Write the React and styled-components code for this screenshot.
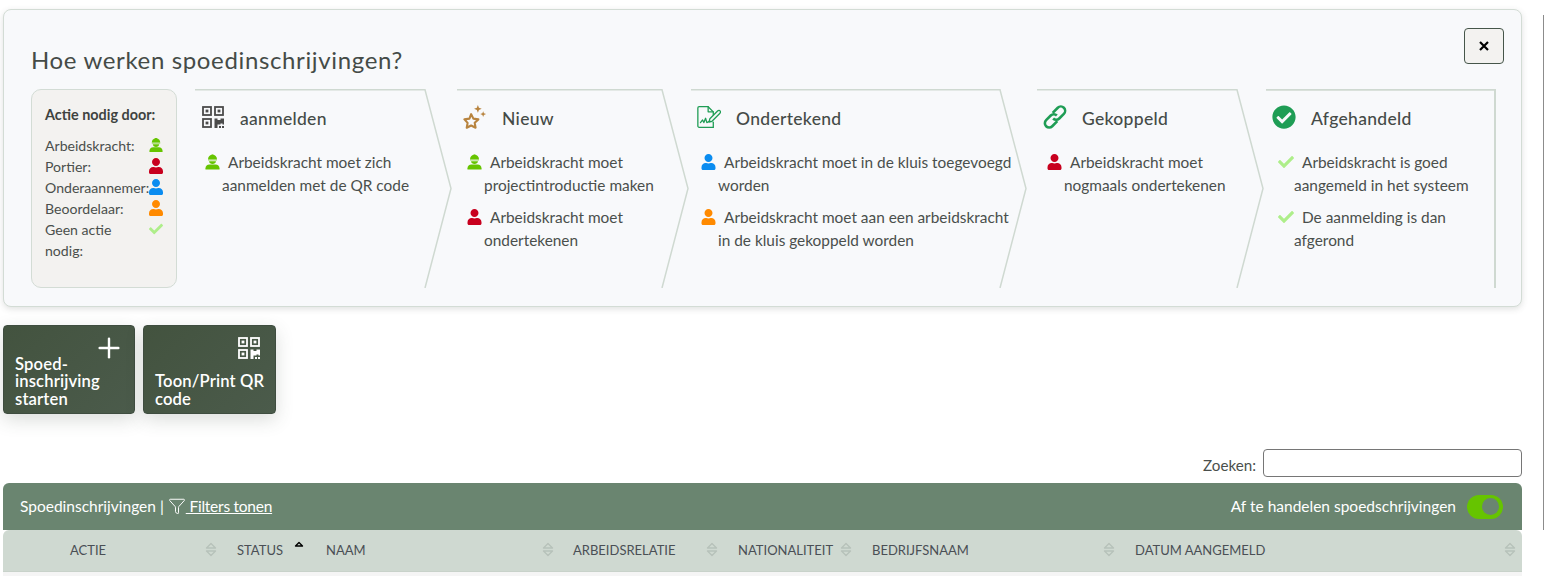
import React from 'react'
import styled, { createGlobalStyle } from 'styled-components'
import { FaUser, FaCheck, FaCheckCircle } from 'react-icons/fa'
import { Filter, Plus } from 'lucide-react'

const GlobalStyle = createGlobalStyle`
	html, body { margin: 0; background: #fff; }
	body { font-family: "Lato", "Noto Sans", sans-serif; color: #4a4f4c; overflow: hidden; }
	* { box-sizing: border-box; }
`

const Page = styled.div`
	padding: 9px 22px 0 3px;
	height: 576px;
	overflow: hidden;
`

const Card = styled.section`
	position: relative;
	height: 298px;
	padding: 0 26px 0 27px;
	background: #f8f9fb;
	border: 1px solid #d3dcd5;
	border-radius: 8px;
	box-shadow: 0 2px 6px rgba(60, 70, 60, 0.16);
`

const Title = styled.h2`
	margin: 0;
	height: 79px;
	padding: 33px 0 0;
	font-size: 24px;
	line-height: 34px;
	font-weight: 400;
	letter-spacing: 0.64px;
	color: #454b47;
`

const CloseButton = styled.button`
	position: absolute;
	top: 18px;
	right: 17px;
	width: 40px;
	height: 36px;
	display: flex;
	align-items: center;
	justify-content: center;
	background: #f3f2f0;
	border: 1px solid #46564a;
	border-radius: 4px;
	color: #000;
	padding: 0;
`

const Body = styled.div`
	display: flex;
	gap: 18px;
	height: 199px;
`

const Legend = styled.aside`
	flex: 0 0 146px;
	padding: 14px 0 0 13px;
	background: #f3f2f0;
	border: 1px solid #d3dcd5;
	border-radius: 10px;
	font-size: 14.1px;
	line-height: 21px;
`

const LegendTitle = styled.div`
	font-weight: 700;
	font-size: 14.4px;
	margin-bottom: 10px;
	color: #3e4340;
`

const LegendGrid = styled.div`
	display: grid;
	grid-template-columns: 104px 14px;
`

const LegendIcon = styled.span`
	display: flex;
	justify-content: center;
	align-items: flex-start;
	padding-top: 2px;
`

const Steps = styled.div`
	flex: 1;
	display: grid;
	grid-template-columns: 262px 234px 346px 229px 1fr;
`

const Step = styled.div`
	position: relative;
	padding-top: 13px;
`

const Outline = styled.svg`
	position: absolute;
	top: 0;
	left: 0;
	height: 199px;
	pointer-events: none;
`

const StepHead = styled.div`
	display: flex;
	align-items: center;
	gap: 15px;
	height: 32px;
	padding-left: 6px;
	margin-bottom: 17px;
`

const HeadIcon = styled.span`
	flex: 0 0 24px;
	min-width: 0;
	height: 24px;
	margin-bottom: 2px;
	display: flex;
	align-items: center;
	justify-content: center;
`

const StepName = styled.h3`
	margin: 0;
	font-size: 17.5px;
	font-weight: 500;
	letter-spacing: 0.3px;
	color: #454b47;
`

const ItemList = styled.div`
	padding: 0 18px 0 ${p => (p.$wide ? 28 : 27)}px;
`

const Item = styled.p`
	margin: 0 0 9px;
	font-size: 15.4px;
	line-height: 23px;
`

const ItemIcon = styled.span`
	display: inline-flex;
	justify-content: center;
	width: ${p => (p.$wide ? 17 : 15)}px;
	margin: 0 8px 0 -17px;
	vertical-align: -2px;
`

const ActionRow = styled.div`
	display: flex;
	gap: 8px;
	margin-top: 18px;
`

const ActionButton = styled.button`
	position: relative;
	width: ${p => p.$width}px;
	height: 89px;
	padding: 0 6px 5px 11px;
	display: flex;
	align-items: flex-end;
	text-align: left;
	background: linear-gradient(135deg, #43533f, #4b5b4b);
	border: 1px solid #3f4d40;
	border-radius: 4px;
	box-shadow: 0 6px 18px rgba(60, 70, 60, 0.18);
	color: #fff;
	font-family: inherit;
	font-size: 16.6px;
	font-weight: 600;
	letter-spacing: 0.15px;
	line-height: 17.5px;
`

const ButtonIcon = styled.span`
	position: absolute;
	top: ${p => p.$top}px;
	right: ${p => p.$right}px;
	display: flex;
`

const SearchRow = styled.div`
	display: flex;
	justify-content: flex-end;
	align-items: center;
	gap: 7px;
	margin-top: 35px;
	margin-bottom: 6px;
	font-size: 15.2px;
`

const SearchLabel = styled.label`
	padding-top: 3px;
`

const SearchInput = styled.input`
	width: 259px;
	height: 28px;
	background: #fff;
	border: 1px solid #767676;
	border-radius: 4px;
`

const TableBar = styled.div`
	height: 47px;
	padding: 0 19px 0 17px;
	display: flex;
	justify-content: space-between;
	align-items: center;
	background: #6a8570;
	border-radius: 6px 6px 0 0;
	color: #fff;
	font-size: 15.5px;
`

const BarLeft = styled.div`
	display: flex;
	align-items: center;
	padding-bottom: 2px;
`

const FilterLink = styled.span`
	letter-spacing: -0.25px;
	text-decoration: underline;
	white-space: pre;
`

const BarRight = styled.div`
	display: flex;
	align-items: center;
	gap: 11px;
`

const BarLabel = styled.span`
	padding-bottom: 2px;
`

const Toggle = styled.span`
	display: flex;
	justify-content: flex-end;
	align-items: center;
	width: 36px;
	height: 24px;
	padding-right: 4px;
	background: #66c400;
	border-radius: 12px;
`

const ToggleKnob = styled.span`
	width: 17px;
	height: 17px;
	background: #6a8570;
	border-radius: 50%;
`

const HeadRow = styled.div`
	display: grid;
	grid-template-columns: 220px 89px 248px 164px 134px 263px 1fr;
	height: 42px;
	background: #cfd9d1;
	border-radius: 6px 6px 0 0;
	border-bottom: 1px solid #c8d2ca;
`

const HeadCell = styled.div`
	display: flex;
	justify-content: space-between;
	align-items: center;
	padding: 0 ${p => (p.$sorted ? 7 : 6)}px 2px ${p => p.$left}px;
	font-size: 13px;
	color: #4a4f55;
	text-transform: uppercase;
`

const RowStub = styled.div`
	height: 4px;
	background: #f5f5f5;
`

const ScrollEdge = styled.div`
	position: absolute;
	top: 15px;
	right: 0;
	width: 1px;
	height: 515px;
	background: #8c8c8c;
`

const HelmetUser = () => (
	<svg width="15" height="16" viewBox="0 0 16 16" fill="#66c400">
		<path d="M3.200 5A4.800 4.800 0 0 1 12.800 5z" />
		<path d="M7 0h2v1H7z" />
		<path d="M3.200 5.400h9.600v.8H3.200z" />
		<path d="M4.300 7.200h7.400C11.600 9 10 10.200 8 10.200S4.400 9 4.300 7.200z" />
		<path d="M4.700 10.700h6.600c2.300 0 4.200 1.800 4.200 4V16H.5v-1.300c0-2.200 1.900-4 4.200-4z" />
	</svg>
)

const QrIcon = ({ color }) => (
	<svg width="22" height="22" viewBox="0 0 22 22" fill="none" stroke={color} strokeWidth="1.800">
		<rect x="1" y="1" width="8" height="8" />
		<rect x="13" y="1" width="8" height="8" />
		<rect x="1" y="13" width="8" height="8" />
		<g fill={color} stroke="none">
			<rect x="3.600" y="3.600" width="2.800" height="2.800" />
			<rect x="15.600" y="3.600" width="2.800" height="2.800" />
			<rect x="3.600" y="15.600" width="2.800" height="2.800" />
			<path d="M12.500 12.500h3v1.500h3v-1.500h3.500v6h-1.500v-1h-2v1h-3v3.500h-3z" />
			<rect x="17" y="20" width="2" height="2" />
			<rect x="20" y="20" width="2" height="2" />
		</g>
	</svg>
)

const SparkleStar = () => (
	<svg width="26" height="26" viewBox="0 0 25 25">
		<path d="M8.500 9.500l2.300 4.700 5.200.8-3.800 3.600.9 5.100-4.600-2.400-4.600 2.400.9-5.100L1.500 15l5.200-.8z" fill="none" stroke="#b8843f" strokeWidth="2.200" strokeLinejoin="round" />
		<path d="M15.500 0l1.100 2.900 2.900 1.100-2.900 1.100-1.100 2.900-1.100-2.900-2.900-1.100 2.900-1.100z" fill="#b8843f" />
		<path d="M21 6.500l.8 2.200 2.200.8-2.200.8-.8 2.200-.8-2.200-2.200-.8 2.200-.8z" fill="#b8843f" />
	</svg>
)

const Signature = () => (
	<svg width="28" height="26" viewBox="0 0 28 26" fill="none" stroke="#1f9d55" strokeWidth="1.500" strokeLinejoin="round" strokeLinecap="round">
		<path d="M19 25H2.500A1.500 1.500 0 0 1 1 23.500v-21A1.500 1.500 0 0 1 2.500 1H13l6 6v3.500" />
		<path d="M13 1v6h6" />
		<path d="M19 19v6" />
		<path d="M4 19.500l2.500-3 1.500 3 2-5 1.500 5 3-1.500h2" />
		<path d="M14 19l1-4 9-9c1-1 2.500-.8 3 0s.5 2-.5 3l-9 9z" />
	</svg>
)

const LinkIcon = () => (
	<svg width="26" height="26" viewBox="0 0 26 26" fill="none" stroke="#1f9d55" strokeWidth="2.800">
		<path d="M10.500 8.500l5.500-5.500a4.600 4.600 0 0 1 6.600 6.600l-5 5a4.600 4.600 0 0 1-6.600 0" />
		<path d="M15.500 17.500l-5.500 5.500a4.600 4.600 0 0 1-6.600-6.600l5-5a4.600 4.600 0 0 1 6.600 0" />
	</svg>
)

const SortIcon = ({ up }) => (
	<svg width="12" height="17" viewBox="0 0 12 17" fill="none" stroke={up ? '#000' : '#b7c2ba'} strokeWidth="1.400" strokeLinejoin="round">
		{up
			? <path d="M2.500 5L6 1.500 9.500 5z" />
			: <>
				<path d="M1.500 7L6 2.500 10.500 7z" />
				<path d="M1.500 10L6 14.500 10.500 10z" />
			</>}
	</svg>
)

const users = {
	worker: <HelmetUser />,
	gate: <FaUser size={16} color="#c8001e" />,
	sub: <FaUser size={16} color="#0a8cf0" />,
	rater: <FaUser size={16} color="#ff8a00" />,
	none: <FaCheck size={16} color="#aeee8a" />,
}

const legend = [
	['Arbeidskracht:', 'worker'],
	['Portier:', 'gate'],
	['Onderaannemer:', 'sub'],
	['Beoordelaar:', 'rater'],
	['Geen actie nodig:', 'none'],
]

const steps = [
	{
		name: 'aanmelden', width: 257, icon: <QrIcon color="#4b4b4b" />,
		items: [['worker', 'Arbeidskracht moet zich aanmelden met de QR code']],
	},
	{
		name: 'Nieuw', width: 232, icon: <SparkleStar />,
		items: [['worker', 'Arbeidskracht moet projectintroductie maken'], ['gate', 'Arbeidskracht moet ondertekenen']],
	},
	{
		name: 'Ondertekend', width: 336, icon: <Signature />,
		items: [['sub', 'Arbeidskracht moet in de kluis toegevoegd worden'], ['rater', 'Arbeidskracht moet aan een arbeidskracht in de kluis gekoppeld worden']],
	},
	{
		name: 'Gekoppeld', width: 227, icon: <LinkIcon />,
		items: [['gate', 'Arbeidskracht moet nogmaals ondertekenen']],
	},
	{
		name: 'Afgehandeld', width: 230, last: true, icon: <FaCheckCircle size={24} color="#1f9d55" />,
		items: [['none', 'Arbeidskracht is goed aangemeld in het systeem'], ['none', 'De aanmelding is dan afgerond']],
	},
]

const columns = [
	['Actie', 67], ['Status', 14, true], ['Naam', 14], ['Arbeidsrelatie', 13],
	['Nationaliteit', 14], ['Bedrijfsnaam', 14], ['Datum aangemeld', 14],
]

const outlinePath = (w, last) => (last
	? `M0 .75H${w - 1}V199`
	: `M0 .75H${w - 27}L${w - 1} 99.500L${w - 27} 199`)

const App = () => (
	<Page>
		<GlobalStyle />
		<Card>
			<Title>Hoe werken spoedinschrijvingen?</Title>
			<CloseButton aria-label="Sluiten">
				<svg width="10" height="10" viewBox="0 0 10 10" stroke="#000" strokeWidth="2.200"><path d="M1 1l8 8M9 1l-8 8" /></svg>
			</CloseButton>
			<Body>
				<Legend>
					<LegendTitle>Actie nodig door:</LegendTitle>
					<LegendGrid>
						{legend.map(([label, key]) => (
							<React.Fragment key={key}>
								<span>{label}</span>
								<LegendIcon>{users[key]}</LegendIcon>
							</React.Fragment>
						))}
					</LegendGrid>
				</Legend>
				<Steps>
					{steps.map(step => (
						<Step key={step.name}>
							<Outline width={step.width} viewBox={`0 0 ${step.width} 199`} fill="none" stroke="#cfd9d1" strokeWidth={step.last ? 2 : 1.5}>
								<path d={outlinePath(step.width, step.last)} />
							</Outline>
							<StepHead>
								<HeadIcon>{step.icon}</HeadIcon>
								<StepName>{step.name}</StepName>
							</StepHead>
							<ItemList $wide={step.last}>
								{step.items.map(([who, text]) => (
									<Item key={text}>
										<ItemIcon $wide={who === 'none'}>{users[who]}</ItemIcon>
										{text}
									</Item>
								))}
							</ItemList>
						</Step>
					))}
				</Steps>
			</Body>
		</Card>
		<ActionRow>
			<ActionButton $width={132}>
				<ButtonIcon $top={6} $right={9}><Plus size={32} color="#fff" strokeWidth={1.800} /></ButtonIcon>
				Spoed-<br />inschrijving<br />starten
			</ActionButton>
			<ActionButton $width={133}>
				<ButtonIcon $top={11} $right={15}><QrIcon color="#fff" /></ButtonIcon>
				Toon/Print QR code
			</ActionButton>
		</ActionRow>
		<SearchRow>
			<SearchLabel htmlFor="zoeken">Zoeken:</SearchLabel>
			<SearchInput id="zoeken" />
		</SearchRow>
		<TableBar>
			<BarLeft>
				Spoedinschrijvingen |&nbsp;
				<Filter size={18} color="#fff" strokeWidth={1.300} />
				<FilterLink> Filters tonen</FilterLink>
			</BarLeft>
			<BarRight>
				<BarLabel>Af te handelen spoedschrijvingen</BarLabel>
				<Toggle><ToggleKnob /></Toggle>
			</BarRight>
		</TableBar>
		<HeadRow>
			{columns.map(([label, left, sorted]) => (
				<HeadCell key={label} $left={left} $sorted={sorted}>
					{label}
					<SortIcon up={sorted} />
				</HeadCell>
			))}
		</HeadRow>
		<RowStub />
		<ScrollEdge />
	</Page>
)

export default App
